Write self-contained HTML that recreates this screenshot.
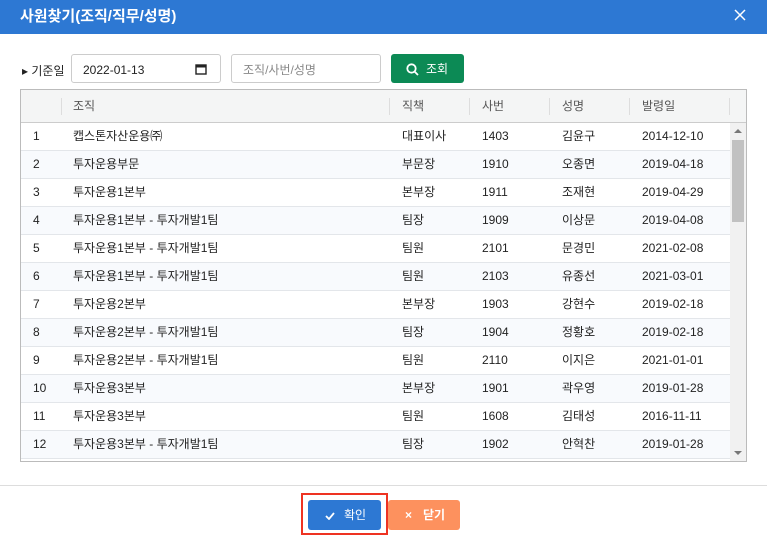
<html><head><style>
body{margin:0;width:767px;height:544px;background:#fff;font-family:"Liberation Sans","Noto Sans CJK KR",sans-serif;position:relative;overflow:hidden;font-size:12px;color:#222}
.hd{position:absolute;left:0;top:0;width:767px;height:34px;background:#2d78d3;color:#fff;font-weight:bold;font-size:15px;line-height:34px;padding-left:20px;box-sizing:border-box}
.x{position:absolute;right:20px;top:8px;width:14px;height:14px}
.a{position:absolute}
.inp{position:absolute;border:1px solid #ccc;border-radius:3px;height:29px;box-sizing:border-box;line-height:30px;font-size:12px;padding-left:11px}
.grid{position:absolute;left:20px;top:89px;width:727px;height:373px;border:1px solid #bbb;box-sizing:border-box;overflow:hidden}
.r{position:absolute;left:0;width:709px;height:28px;border-bottom:1px solid #e3e6ea;box-sizing:border-box;line-height:27px}
.r span{position:absolute}
.h{background:#f4f5f5;height:33px;line-height:32px;color:#555;border-bottom:1px solid #ccc;width:727px;top:0}
.sep{position:absolute;top:8px;width:1px;height:17px;background:#ddd}
</style></head><body>
<div class="hd">사원찾기(조직/직무/성명)</div>
<svg class="x" viewBox="0 0 14 14"><path d="M2 2L12 12M12 2L2 12" stroke="#fff" stroke-width="1.5"/></svg>
<div class="a" style="left:22px;top:62px;font-size:12px">▸ 기준일</div>
<div class="inp" style="left:71px;top:54px;width:150px">2022-01-13<svg style="position:absolute;left:123px;top:9px" width="12" height="11" viewBox="0 0 12 11"><rect x="1" y="1" width="10" height="9" fill="none" stroke="#222" stroke-width="1.4"/><rect x="1" y="1" width="10" height="2.5" fill="#222"/></svg></div>
<div class="inp" style="left:231px;top:54px;width:150px;color:#888">조직/사번/성명</div>
<div class="a" style="left:391px;top:54px;width:73px;height:29px;background:#0c8a55;border-radius:3px;color:#fff;line-height:30px;font-size:12px"><svg style="position:absolute;left:15px;top:9px" width="13" height="13" viewBox="0 0 13 13"><circle cx="5.5" cy="5.5" r="4.2" fill="none" stroke="#fff" stroke-width="1.8"/><path d="M8.5 8.5L12 12" stroke="#fff" stroke-width="1.8"/></svg><span style="position:absolute;left:35px">조회</span></div>
<div class="grid">
<div class="r h"><div class="sep" style="left:40px"></div><span style="left:52px">조직</span><div class="sep" style="left:368px"></div><span style="left:381px">직책</span><div class="sep" style="left:448px"></div><span style="left:461px">사번</span><div class="sep" style="left:528px"></div><span style="left:541px">성명</span><div class="sep" style="left:608px"></div><span style="left:621px">발령일</span><div class="sep" style="left:708px"></div></div>
<div id="rows"></div>
<div style="position:absolute;left:709px;top:33px;width:16px;height:338px;background:#f1f1f1"><div style="position:absolute;left:2px;top:17px;width:12px;height:82px;background:#c1c1c1"></div><div style="position:absolute;left:4px;top:6px;border:4px solid transparent;border-bottom:4px solid #777;border-top:none"></div><div style="position:absolute;left:4px;bottom:6px;border:4px solid transparent;border-top:4px solid #777;border-bottom:none"></div></div>
</div>
<div class="a" style="left:0;top:485px;width:767px;height:1px;background:#ddd"></div>
<div class="a" style="left:301px;top:493px;width:87px;height:42px;border:2px solid #e32;box-sizing:border-box"></div>
<div class="a" style="left:308px;top:500px;width:73px;height:30px;background:#2d78d3;border-radius:3px;color:#fff;line-height:30px;font-size:12px"><svg style="position:absolute;left:17px;top:12px" width="10" height="8" viewBox="0 0 10 8"><path d="M1 4L4 7L9 1" fill="none" stroke="#fff" stroke-width="1.8"/></svg><span style="position:absolute;left:36px">확인</span></div>
<div class="a" style="left:388px;top:500px;width:72px;height:30px;background:#fd915e;border-radius:3px;color:#fff;line-height:30px;font-size:12px;font-weight:bold"><span style="position:absolute;left:17px">×</span><span style="position:absolute;left:35px">닫기</span></div>
<script>
var d=[["캡스톤자산운용㈜","대표이사","1403","김윤구","2014-12-10"],["투자운용부문","부문장","1910","오종면","2019-04-18"],["투자운용1본부","본부장","1911","조재현","2019-04-29"],["투자운용1본부 - 투자개발1팀","팀장","1909","이상문","2019-04-08"],["투자운용1본부 - 투자개발1팀","팀원","2101","문경민","2021-02-08"],["투자운용1본부 - 투자개발1팀","팀원","2103","유종선","2021-03-01"],["투자운용2본부","본부장","1903","강현수","2019-02-18"],["투자운용2본부 - 투자개발1팀","팀장","1904","정황호","2019-02-18"],["투자운용2본부 - 투자개발1팀","팀원","2110","이지은","2021-01-01"],["투자운용3본부","본부장","1901","곽우영","2019-01-28"],["투자운용3본부","팀원","1608","김태성","2016-11-11"],["투자운용3본부 - 투자개발1팀","팀장","1902","안혁찬","2019-01-28"]];
var h="";d.forEach(function(r,i){h+='<div class="r" style="top:'+(33+i*28)+'px;background:'+(i%2?'#f8fafd':'#fff')+'"><span style="left:12px">'+(i+1)+'</span><span style="left:52px">'+r[0]+'</span><span style="left:381px">'+r[1]+'</span><span style="left:461px">'+r[2]+'</span><span style="left:541px">'+r[3]+'</span><span style="left:621px">'+r[4]+'</span></div>';});
document.getElementById("rows").innerHTML=h;
</script>
</body></html>
